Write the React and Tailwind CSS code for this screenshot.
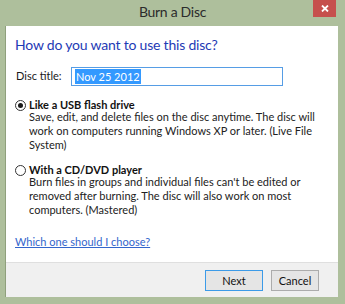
export default function App() {
  return (
    <div className="w-[345px] h-[304px] bg-[#aebf9c] flex flex-col overflow-hidden" style={{ fontFamily: 'Lato, "Noto Sans", sans-serif' }}>
      {/* Title bar */}
      <div className="relative h-[26px] shrink-0 flex items-center justify-center">
        <span className="text-[14px] tracking-[-0.3px] text-[#2b2b2b] leading-none -mt-[2px]">Burn a Disc</span>
        <div className="absolute right-[9px] top-0 w-[23px] h-[17px] bg-[#c6504d] flex items-center justify-center">
          <svg width="8" height="7" viewBox="0 0 8 7">
            <path d="M1 0.5 L7 6.5 M7 0.5 L1 6.5" stroke="#fff" strokeWidth="1.8" />
          </svg>
        </div>
      </div>

      {/* Dialog body */}
      <div className="ml-[5px] mr-[7px] flex flex-col border-l border-[#8fa07c]">
        <div className="bg-white h-[236px] pl-[9px] pr-[12px] pt-[9px]">
          <h1 className="text-[14px] tracking-[-0.2px] text-[#1e3ab5] leading-[20px]">How do you want to use this disc?</h1>

          <div className="flex items-center mt-[12px] h-[19px]">
            <label className="text-[11px] text-[#1a1a1a] w-[56px] pl-[1px]">Disc title:</label>
            <div className="w-[212px] h-[19px] border border-[#569de5] flex items-center pl-[3px]">
              <span className="bg-[#3399ff] text-white text-[11px] leading-[15px] px-[1px]">Nov 25 2012</span>
            </div>
          </div>

          <div className="mt-[12px]">
            <div className="flex items-center gap-[3px] h-[14px]">
              <span className="w-[11px] h-[11px] rounded-full border border-[#333] flex items-center justify-center bg-white">
                <span className="w-[5px] h-[5px] rounded-full bg-[#1a1a1a]" />
              </span>
              <span className="text-[11px] font-bold text-[#111]">Like a USB flash drive</span>
            </div>
            <p className="ml-[14px] text-[11px] leading-[14px] text-[#222] -mt-[2px]">
              Save, edit, and delete files on the disc anytime. The disc will work on computers running Windows XP or later. (Live File System)
            </p>
          </div>

          <div className="mt-[11px]">
            <div className="flex items-center gap-[3px] h-[14px]">
              <span className="w-[11px] h-[11px] rounded-full border border-[#333] bg-white" />
              <span className="text-[11px] font-bold text-[#111]">With a CD/DVD player</span>
            </div>
            <p className="ml-[14px] text-[11px] leading-[14px] text-[#222] -mt-[2px]">
              Burn files in groups and individual files can't be edited or removed after burning. The disc will also work on most computers. (Mastered)
            </p>
          </div>

          <a className="block mt-[18px] text-[11px] text-[#3366cc] underline leading-[14px]">Which one should I choose?</a>
        </div>

        {/* Footer */}
        <div className="bg-[#f0f0f0] border-t border-[#dfdfdf] h-[35px] flex items-center justify-end gap-[8px] pr-[19px]">
          <button className="w-[58px] h-[21px] bg-[#e5e5e5] border border-[#3c9be8] text-[11px] text-[#111] leading-none">Next</button>
          <button className="w-[48px] h-[21px] bg-[#e5e5e5] border border-[#acacac] text-[11px] text-[#111] leading-none">Cancel</button>
        </div>
      </div>
    </div>
  )
}
